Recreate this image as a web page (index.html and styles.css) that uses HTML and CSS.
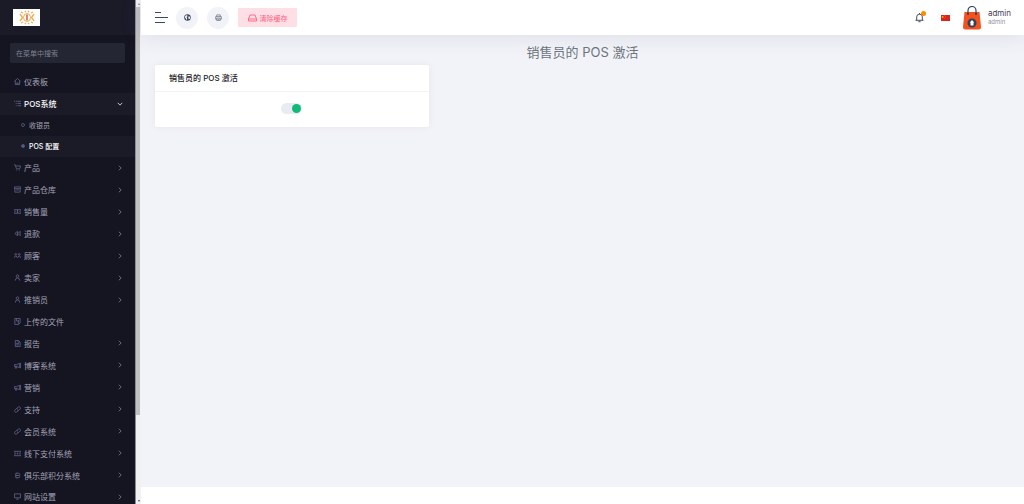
FILE: index.html
```
<!DOCTYPE html>
<html lang="zh-CN">
<head>
  <meta charset="UTF-8">
  <meta name="viewport" content="width=device-width, initial-scale=1.0">
  <title>销售员的 POS 激活</title>
  <link rel="stylesheet" href="styles.css">
</head>
<body>

<aside class="sidebar">
  <div class="sidebar-inner">
    <a class="brand" href="#" aria-label="admin">
      <svg class="brand-logo" viewBox="0 0 27 17">
        <rect width="27" height="17" fill="#fff"/>
        <g fill="none" stroke="#f0ac48">
          <ellipse cx="14" cy="8.500" rx="3.500" ry="4" stroke-width="1"/>
          <path d="M10 4l-2-1M18 4l2-1M10 13l-2 1M18 13l2 1M12 3l1-1M16 3l-1-1M12 14l1 1M16 14l-1 1" stroke-width="1.300"/>
          <path d="M7 5l2.500 3.500L7 12M21 5l-2.500 3.500L21 12" stroke-width="1.300"/>
        </g>
        <path d="M14 5.500v6" stroke="#e0484c" stroke-width="1.400"/>
      </svg>
    </a>
    <div class="menu-search">
      <input type="text" id="menu-search" placeholder="在菜单中搜索" aria-label="在菜单中搜索">
    </div>
    <ul class="menu" id="menu">
      <li><a href="#"><svg class="icon"><use href="#i-home"/></svg><span>仪表板</span></a></li>
      <li class="open">
        <a href="#"><svg class="icon"><use href="#i-list"/></svg><span>POS系统</span><svg class="arrow down"><use href="#i-arrow"/></svg></a>
        <ul class="submenu">
          <li><a href="#"><i class="dot"></i><span>收银员</span></a></li>
          <li class="active"><a href="#"><i class="dot"></i><span>POS 配置</span></a></li>
        </ul>
      </li>
      <li><a href="#"><svg class="icon"><use href="#i-cart"/></svg><span>产品</span><svg class="arrow"><use href="#i-arrow"/></svg></a></li>
      <li><a href="#"><svg class="icon"><use href="#i-store"/></svg><span>产品仓库</span><svg class="arrow"><use href="#i-arrow"/></svg></a></li>
      <li><a href="#"><svg class="icon"><use href="#i-money"/></svg><span>销售量</span><svg class="arrow"><use href="#i-arrow"/></svg></a></li>
      <li><a href="#"><svg class="icon"><use href="#i-back"/></svg><span>退款</span><svg class="arrow"><use href="#i-arrow"/></svg></a></li>
      <li><a href="#"><svg class="icon"><use href="#i-users"/></svg><span>顾客</span><svg class="arrow"><use href="#i-arrow"/></svg></a></li>
      <li><a href="#"><svg class="icon"><use href="#i-user"/></svg><span>卖家</span><svg class="arrow"><use href="#i-arrow"/></svg></a></li>
      <li><a href="#"><svg class="icon"><use href="#i-user"/></svg><span>推销员</span><svg class="arrow"><use href="#i-arrow"/></svg></a></li>
      <li><a href="#"><svg class="icon"><use href="#i-upload"/></svg><span>上传的文件</span></a></li>
      <li><a href="#"><svg class="icon"><use href="#i-file"/></svg><span>报告</span><svg class="arrow"><use href="#i-arrow"/></svg></a></li>
      <li><a href="#"><svg class="icon"><use href="#i-horn"/></svg><span>博客系统</span><svg class="arrow"><use href="#i-arrow"/></svg></a></li>
      <li><a href="#"><svg class="icon"><use href="#i-horn"/></svg><span>营销</span><svg class="arrow"><use href="#i-arrow"/></svg></a></li>
      <li><a href="#"><svg class="icon"><use href="#i-link"/></svg><span>支持</span><svg class="arrow"><use href="#i-arrow"/></svg></a></li>
      <li><a href="#"><svg class="icon"><use href="#i-link"/></svg><span>会员系统</span><svg class="arrow"><use href="#i-arrow"/></svg></a></li>
      <li><a href="#"><svg class="icon"><use href="#i-cash"/></svg><span>线下支付系统</span><svg class="arrow"><use href="#i-arrow"/></svg></a></li>
      <li><a href="#"><svg class="icon"><use href="#i-coin"/></svg><span>俱乐部积分系统</span><svg class="arrow"><use href="#i-arrow"/></svg></a></li>
      <li><a href="#"><svg class="icon"><use href="#i-screen"/></svg><span>网站设置</span><svg class="arrow"><use href="#i-arrow"/></svg></a></li>
    </ul>
  </div>
  <div class="scrollbar">
    <i class="scroll-up"></i>
    <div class="scroll-track"><div class="scroll-thumb"></div></div>
    <i class="scroll-down"></i>
  </div>
</aside>

<div class="content">
  <header class="topbar">
    <button class="menu-toggle" type="button" aria-label="菜单"><i></i><i></i><i></i></button>
    <a class="round-btn" href="#" aria-label="浏览网站">
      <svg viewBox="0 0 16 16"><circle cx="8" cy="8" r="7.500" fill="#3d4663"/><path d="M3 4l4-2 1 3-2 2 1 3-1 4-2-4-2-2zM10 5l4 1v4l-3 2-1-3z" fill="#f2f3f8"/></svg>
    </a>
    <a class="round-btn" href="#" aria-label="POS">
      <svg viewBox="0 0 16 16" fill="none" stroke="#5b6276" stroke-width="1.500"><path d="M4 6V2h8v4M4 12H1.500V6h13v6H12M4 9.500h8V15H4zM6 12.500h4"/></svg>
    </a>
    <button class="cache-btn" type="button">
      <svg viewBox="0 0 18 16" fill="none" stroke="#fd5f82" stroke-width="1.800"><path d="M1 10L4 2h10l3 8v4H1zM1 10h16"/></svg>
      清除缓存
    </button>
    <div class="topbar-right">
      <a class="bell" href="#" aria-label="通知">
        <svg viewBox="0 0 16 18" fill="none" stroke="#3d4663" stroke-width="1.700"><path d="M1 14h14M3 14V8a5 5 0 0 1 10 0v6M8 1v2M6 16.500h4"/></svg>
        <span class="badge"></span>
      </a>
      <a class="flag" href="#" aria-label="中文">
        <svg viewBox="0 0 18 12"><rect width="18" height="12" fill="#d8261e"/><path d="M3.500 1.500l.6 1.600h1.700L4.500 4.200 5 6 3.500 5 2 6l.5-1.800L1.200 3.100h1.700z" fill="#ffde00"/><path d="M7 1h1v1H7zM8.500 2.500h1v1h-1zM8.500 4.500h1v1h-1zM7 6h1v1H7z" fill="#ffb000"/></svg>
      </a>
      <a class="profile" href="#">
        <svg class="avatar" viewBox="0 0 18 24">
          <path d="M1.500 6h15L18 21q0 2.500-2.500 2.500h-13Q0 23.500 0 21z" fill="#f4511e"/>
          <path d="M5 8V4.500a4 4 0 0 1 8 0V8" fill="none" stroke="#2f4257" stroke-width="1.200"/>
          <circle cx="5" cy="8" r="1" fill="#2f4257"/><circle cx="13" cy="8" r="1" fill="#2f4257"/>
          <circle cx="9" cy="17" r="4.500" fill="#2f4257"/>
          <path d="M9 14l2.300 2.500h-.8V19.500h-3V16.500h-.8z" fill="#fff"/>
        </svg>
        <span class="profile-text"><b>admin</b><small>admin</small></span>
      </a>
    </div>
  </header>

  <main>
    <h1>销售员的 POS 激活</h1>
    <section class="card">
      <h2 id="pos-title">销售员的 POS 激活</h2>
      <div class="card-body">
        <input class="switch" type="checkbox" aria-labelledby="pos-title" checked>
      </div>
    </section>
  </main>
  <footer></footer>
</div>

<!-- line icons for the menu -->
<svg class="sprite">
  <symbol id="i-home" viewBox="0 0 16 16"><path d="M1 7.500L8 1l7 6.500M3 6v9h10V6M6.500 15v-4h3v4"/></symbol>
  <symbol id="i-list" viewBox="0 0 16 16"><path d="M0 3h3M5 3h11M4 8h2M8 8h8M4 13h2M8 13h8"/></symbol>
  <symbol id="i-cart" viewBox="0 0 16 16"><path d="M0 2h3l2.500 9H13l2-6.500H4M5 14h2M11 14h2"/></symbol>
  <symbol id="i-store" viewBox="0 0 16 16"><path d="M1 2h14v4H1zM2 6v8h12V6M5 9h6"/></symbol>
  <symbol id="i-money" viewBox="0 0 16 16"><path d="M0 4h16v8H0zM8 4v8M4 7v2M12 7v2"/></symbol>
  <symbol id="i-back" viewBox="0 0 16 16"><path d="M8 3L2 8l6 5zM14 3L9 8l5 5z"/></symbol>
  <symbol id="i-users" viewBox="0 0 16 16"><circle cx="4" cy="5.500" r="2"/><circle cx="12" cy="5.500" r="2"/><path d="M1 13v-2q3-3 6 0v2M9 13v-2q3-3 6 0v2"/></symbol>
  <symbol id="i-user" viewBox="0 0 16 16"><circle cx="8" cy="5" r="3"/><path d="M3 15q0-6 5-6t5 6"/></symbol>
  <symbol id="i-upload" viewBox="0 0 16 16"><path d="M2 1h12v10l-4 4H2zM6 1v6h4M10 4v11"/></symbol>
  <symbol id="i-file" viewBox="0 0 16 16"><path d="M3 1h7l4 4v10H3zM5 8h6M5 11h6M9 1v4h4"/></symbol>
  <symbol id="i-horn" viewBox="0 0 16 16"><path d="M1 6h5l7-3v10l-7-3H1zM3 10v4h3v-4M15 2v12"/></symbol>
  <symbol id="i-link" viewBox="0 0 16 16"><path d="M7 5l3-3q2-1 4 1t0 4l-3 3q-2 1-4-1M9 11l-3 3q-2 1-4-1t0-4l3-3q2-1 4 1"/></symbol>
  <symbol id="i-cash" viewBox="0 0 16 16"><path d="M0 3h16v10H0zM4 6v4M8 6v4M12 6v4"/></symbol>
  <symbol id="i-coin" viewBox="0 0 16 16"><path d="M4 3h6q3 0 3 2.500T10 8H4h6q3 0 3 2.500T10 13H4zM7 1v2M7 13v2"/></symbol>
  <symbol id="i-screen" viewBox="0 0 16 16"><path d="M1 2h14v9H1zM5 14h6"/></symbol>
  <symbol id="i-arrow" viewBox="0 0 16 16"><path d="M5 2l6 6-6 6"/></symbol>
</svg>

</body>
</html>
```
FILE: styles.css
```
* {
  box-sizing: border-box;
}
body {
  display: flex;
  height: 100vh;
  margin: 0;
  overflow: hidden;
  background: #f2f3f8;
  font-family: Inter, "Noto Sans CJK SC", sans-serif;
  font-size: 8px;
  color: #1b1b28;
}
a {
  color: inherit;
  text-decoration: none;
}
ul {
  list-style: none;
  margin: 0;
  padding: 0;
}
button {
  border: 0;
  padding: 0;
  font: inherit;
  cursor: pointer;
}
.sprite {
  position: absolute;
  width: 0;
  height: 0;
}

/* sidebar */
.sidebar {
  display: flex;
  flex: none;
  width: 141px;
  background: #151521;
}
.sidebar-inner {
  display: flex;
  flex: 1;
  flex-direction: column;
}
.brand {
  display: flex;
  flex: none;
  align-items: center;
  height: 35px;
  padding-left: 13px;
  background: #1b1b28;
}
.brand-logo {
  width: 27px;
  height: 17px;
}
.menu-search {
  padding: 8px 10px;
}
.menu-search input {
  display: block;
  width: 100%;
  height: 20px;
  border: 0;
  border-radius: 2px;
  padding: 0 6px;
  background: #242634;
  color: #a2a3b7;
  font: inherit;
  font-size: 7px;
}
.menu-search input::placeholder {
  color: #7f8190;
}
.menu {
  display: flex;
  flex: 1;
  flex-direction: column;
  margin-bottom: -4px;
  min-height: 0;
}
.menu > li {
  flex: 0 1 22px;
  min-height: 20px;
}
.menu > .open {
  flex: none;
}
.menu a {
  display: flex;
  align-items: center;
  height: 100%;
  padding: 0 12px 0 14px;
  color: #a2a3b7;
}
.menu > .open > a {
  height: 22px;
  background: #1b1b28;
  color: #fff;
  font-weight: 500;
}
.icon {
  width: 7px;
  height: 7px;
  margin-right: 3px;
  fill: none;
  stroke: #5c5f83;
  stroke-width: 2;
}
.arrow {
  width: 6px;
  height: 6px;
  margin-left: auto;
  fill: none;
  stroke: #8587a0;
  stroke-width: 2;
}
.arrow.down {
  transform: rotate(90deg);
  stroke: #fff;
}
.submenu a {
  height: 21px;
  padding-left: 21px;
  font-size: 7px;
}
.submenu .active a {
  background: #1b1b28;
  color: #fff;
  font-weight: 500;
}
.dot {
  width: 4px;
  height: 4px;
  margin-right: 4px;
  border: 1px solid #4d5072;
  border-radius: 50%;
}
.active .dot {
  background: #5c5f83;
}

.scrollbar {
  display: flex;
  flex-direction: column;
  align-items: center;
  justify-content: space-between;
  width: 6px;
  padding: 2px 0;
  border-left: 1px solid #8d8d96;
  background: #f1f1f1;
}
.scroll-track {
  flex: 1;
  width: 100%;
  padding: 2px 1px 2px 0;
}
.scroll-thumb {
  height: 83%;
  background: #c1c1c1;
}
.scroll-up,
.scroll-down {
  border: 1px solid transparent;
  border-bottom: 2px solid #8a8a8a;
}
.scroll-down {
  border-bottom: 0;
  border-top: 2px solid #505050;
}

/* page */
.content {
  display: flex;
  flex: 1;
  flex-direction: column;
  min-width: 0;
}
.topbar {
  display: flex;
  flex: none;
  align-items: center;
  height: 35px;
  padding: 0 13px 0 14px;
  background: #fff;
  box-shadow: 0 0 22px rgba(82, 63, 145, 0.14);
}
.menu-toggle {
  display: flex;
  flex-direction: column;
  gap: 4px;
  width: 13px;
  margin-right: 8px;
  background: none;
}
.menu-toggle i {
  width: 6px;
  height: 1px;
  background: #3d4663;
}
.menu-toggle i:nth-child(2) {
  width: 13px;
}
.menu-toggle i:nth-child(3) {
  width: 10px;
}
.round-btn {
  display: flex;
  align-items: center;
  justify-content: center;
  width: 22px;
  height: 22px;
  margin-right: 9px;
  border-radius: 50%;
  background: #f2f3f8;
}
.round-btn svg {
  width: 7px;
  height: 7px;
}
.cache-btn {
  display: flex;
  align-items: center;
  justify-content: center;
  gap: 3px;
  width: 59px;
  height: 19px;
  border-radius: 1px;
  background: #ffdfe6;
  color: #fd5f82;
  font-size: 7px;
}
.cache-btn svg {
  width: 9px;
  height: 8px;
}
.topbar-right {
  display: flex;
  align-items: center;
  margin-left: auto;
}
.bell {
  position: relative;
  display: flex;
  margin-right: 17px;
}
.bell svg {
  width: 9px;
  height: 11px;
}
.badge {
  position: absolute;
  top: -1px;
  right: -2px;
  width: 5px;
  height: 5px;
  border-radius: 50%;
  background: #ff8a00;
}
.flag {
  display: flex;
  margin-right: 13px;
}
.flag svg {
  width: 9px;
  height: 6px;
}
.profile {
  display: flex;
  align-items: center;
}
.avatar {
  width: 18px;
  height: 24px;
  margin-right: 7px;
}
.profile-text {
  display: flex;
  flex-direction: column;
}
.profile-text b {
  color: #3f4254;
  font-size: 8px;
  font-weight: 400;
  line-height: 9px;
}
.profile-text small {
  font-size: 6px;
  line-height: 8px;
  color: #8f919c;
}

main {
  flex: 1;
  padding: 8px 14px;
}
h1 {
  margin: 0 0 4px;
  font-size: 13px;
  font-weight: 400;
  line-height: 18px;
  text-align: center;
  color: #6c757d;
}
.card {
  width: 32%;
  border-radius: 2px;
  background: #fff;
  box-shadow: 0 0 7px rgba(82, 63, 105, 0.07);
}
.card h2 {
  margin: 0;
  padding: 0 14px;
  border-bottom: 1px solid #f2f3f8;
  font-size: 8px;
  font-weight: 500;
  line-height: 26px;
}
.card-body {
  display: flex;
  justify-content: center;
  padding: 11px 14px 13px;
}
.switch {
  appearance: none;
  display: flex;
  align-items: center;
  justify-content: flex-end;
  width: 21px;
  height: 11px;
  margin: 0;
  border-radius: 6px;
  padding: 0 1px;
  background: #e8ebf1;
}
.switch::before {
  content: "";
  width: 9px;
  height: 9px;
  border-radius: 50%;
  background: #10bb7a;
}
.switch:not(:checked) {
  justify-content: flex-start;
}
footer {
  flex: none;
  height: 17px;
  background: #fff;
}
```
